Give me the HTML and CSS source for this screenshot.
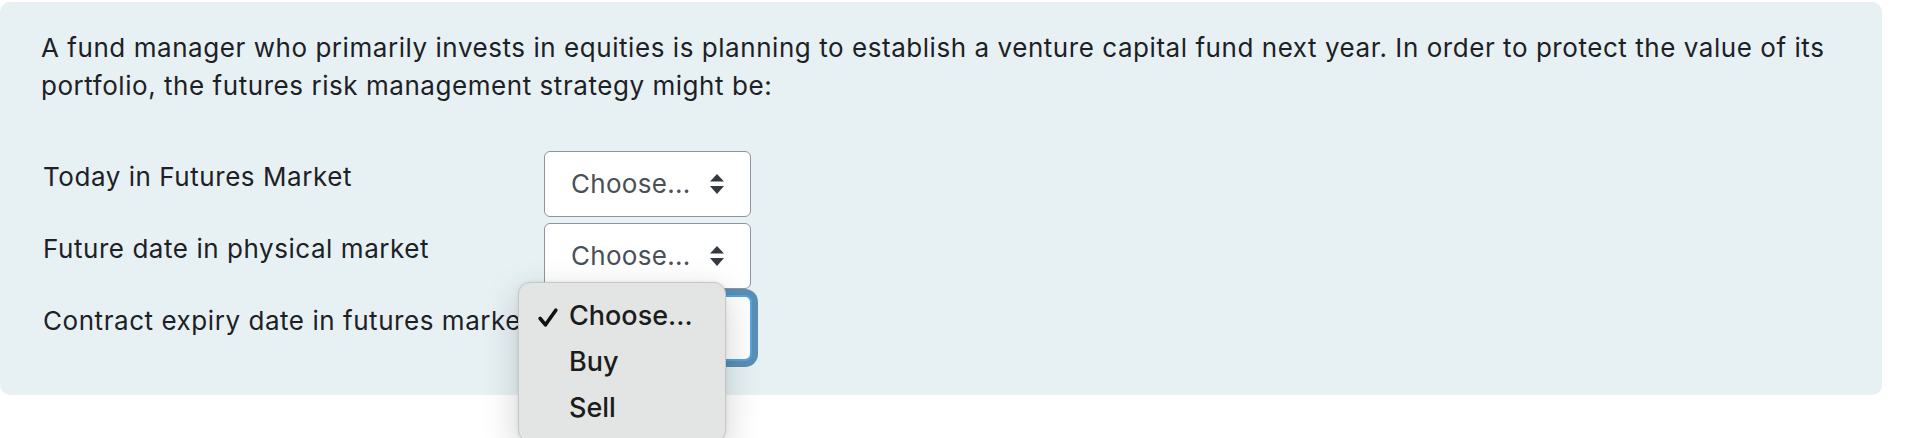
FILE: index.html
```html
<!DOCTYPE html>
<html lang="en">
<head>
<meta charset="utf-8">
<title>Question</title>
<link rel="stylesheet" href="styles.css">
</head>
<body>
<div class="que">
  <p class="qtext">A fund manager who primarily invests in equities is planning to establish a venture capital fund next year. In order to protect the value of its portfolio, the futures risk management strategy might be:</p>
  <div class="answers">
    <div class="row">
      <div class="label">Today in Futures Market</div>
      <div class="select">
        <span>Choose...</span>
        <svg class="arrows" width="16" height="20" viewBox="0 0 16 20"><path d="M8 0 L15 7.5 H1 Z M8 20 L15 12 H1 Z" fill="#343a40"/></svg>
      </div>
    </div>
    <div class="row">
      <div class="label">Future date in physical market</div>
      <div class="select">
        <span>Choose...</span>
        <svg class="arrows" width="16" height="20" viewBox="0 0 16 20"><path d="M8 0 L15 7.5 H1 Z M8 20 L15 12 H1 Z" fill="#343a40"/></svg>
      </div>
    </div>
    <div class="row">
      <div class="label">Contract expiry date in futures market</div>
      <div class="select focused">
        <span>Choose...</span>
        <svg class="arrows" width="16" height="20" viewBox="0 0 16 20"><path d="M8 0 L15 7.5 H1 Z M8 20 L15 12 H1 Z" fill="#343a40"/></svg>
      </div>
    </div>
  </div>
</div>
<div class="menu">
  <div class="item"><svg class="check" width="20" height="19" viewBox="0 0 20 19"><path d="M2.2 10.5 L7.5 16.8 L17.8 2.2" fill="none" stroke="#111111" stroke-width="3.6" stroke-linecap="round" stroke-linejoin="round"/></svg><span>Choose...</span></div>
  <div class="item"><span>Buy</span></div>
  <div class="item"><span>Sell</span></div>
</div>
</body>
</html>
```

FILE: styles.css
```css
html, body {
  margin: 0;
  padding: 0;
  background: #ffffff;
}

body {
  font-family: Inter, "Noto Sans", "Liberation Sans", sans-serif;
  font-size: 26px;
  line-height: 38px;
  letter-spacing: 0.55px;
  color: #1d2125;
  position: relative;
  height: 438px;
  overflow: hidden;
}

.que {
  margin: 2px 24px 0 0;
  background: #e7f1f4;
  border-radius: 10px;
  padding: 27px 40px 34px 41px;
}

.qtext {
  margin: 0 0 46px 0;
}

.answers {
  display: flex;
  flex-direction: column;
  gap: 6px;
}

.row {
  display: flex;
  align-items: flex-start;
}

.label {
  width: 501px;
  padding: 7px 0 0 2px;
  white-space: nowrap;
}

.select {
  box-sizing: border-box;
  width: 207px;
  height: 66px;
  background: #ffffff;
  border: 1px solid #8f959e;
  border-radius: 6px;
  display: flex;
  align-items: center;
  justify-content: space-between;
  padding: 0 25px 0 26px;
  color: #495057;
  letter-spacing: 0.3px;
}

.select.focused {
  width: 208px;
  border: 2px solid #4fa6e3;
  border-radius: 7px;
  box-shadow: 0 0 0 6px #5a8fb3;
}

.arrows {
  display: block;
}

.menu {
  position: absolute;
  left: 518px;
  top: 282px;
  width: 208px;
  box-sizing: border-box;
  padding: 10px 0;
  background: #e3e4e4;
  border: 1px solid #c6c7c7;
  border-radius: 12px;
  box-shadow: 0 12px 36px rgba(0, 0, 0, 0.18), 0 0 4px rgba(0, 0, 0, 0.08);
  font-size: 27px;
  line-height: 46px;
  font-weight: 500;
  letter-spacing: 0;
  color: #1c1c1c;
}

.item {
  display: flex;
  align-items: center;
  padding-left: 50px;
  position: relative;
  height: 46px;
}

.check {
  position: absolute;
  left: 19px;
  top: 15px;
}
```
